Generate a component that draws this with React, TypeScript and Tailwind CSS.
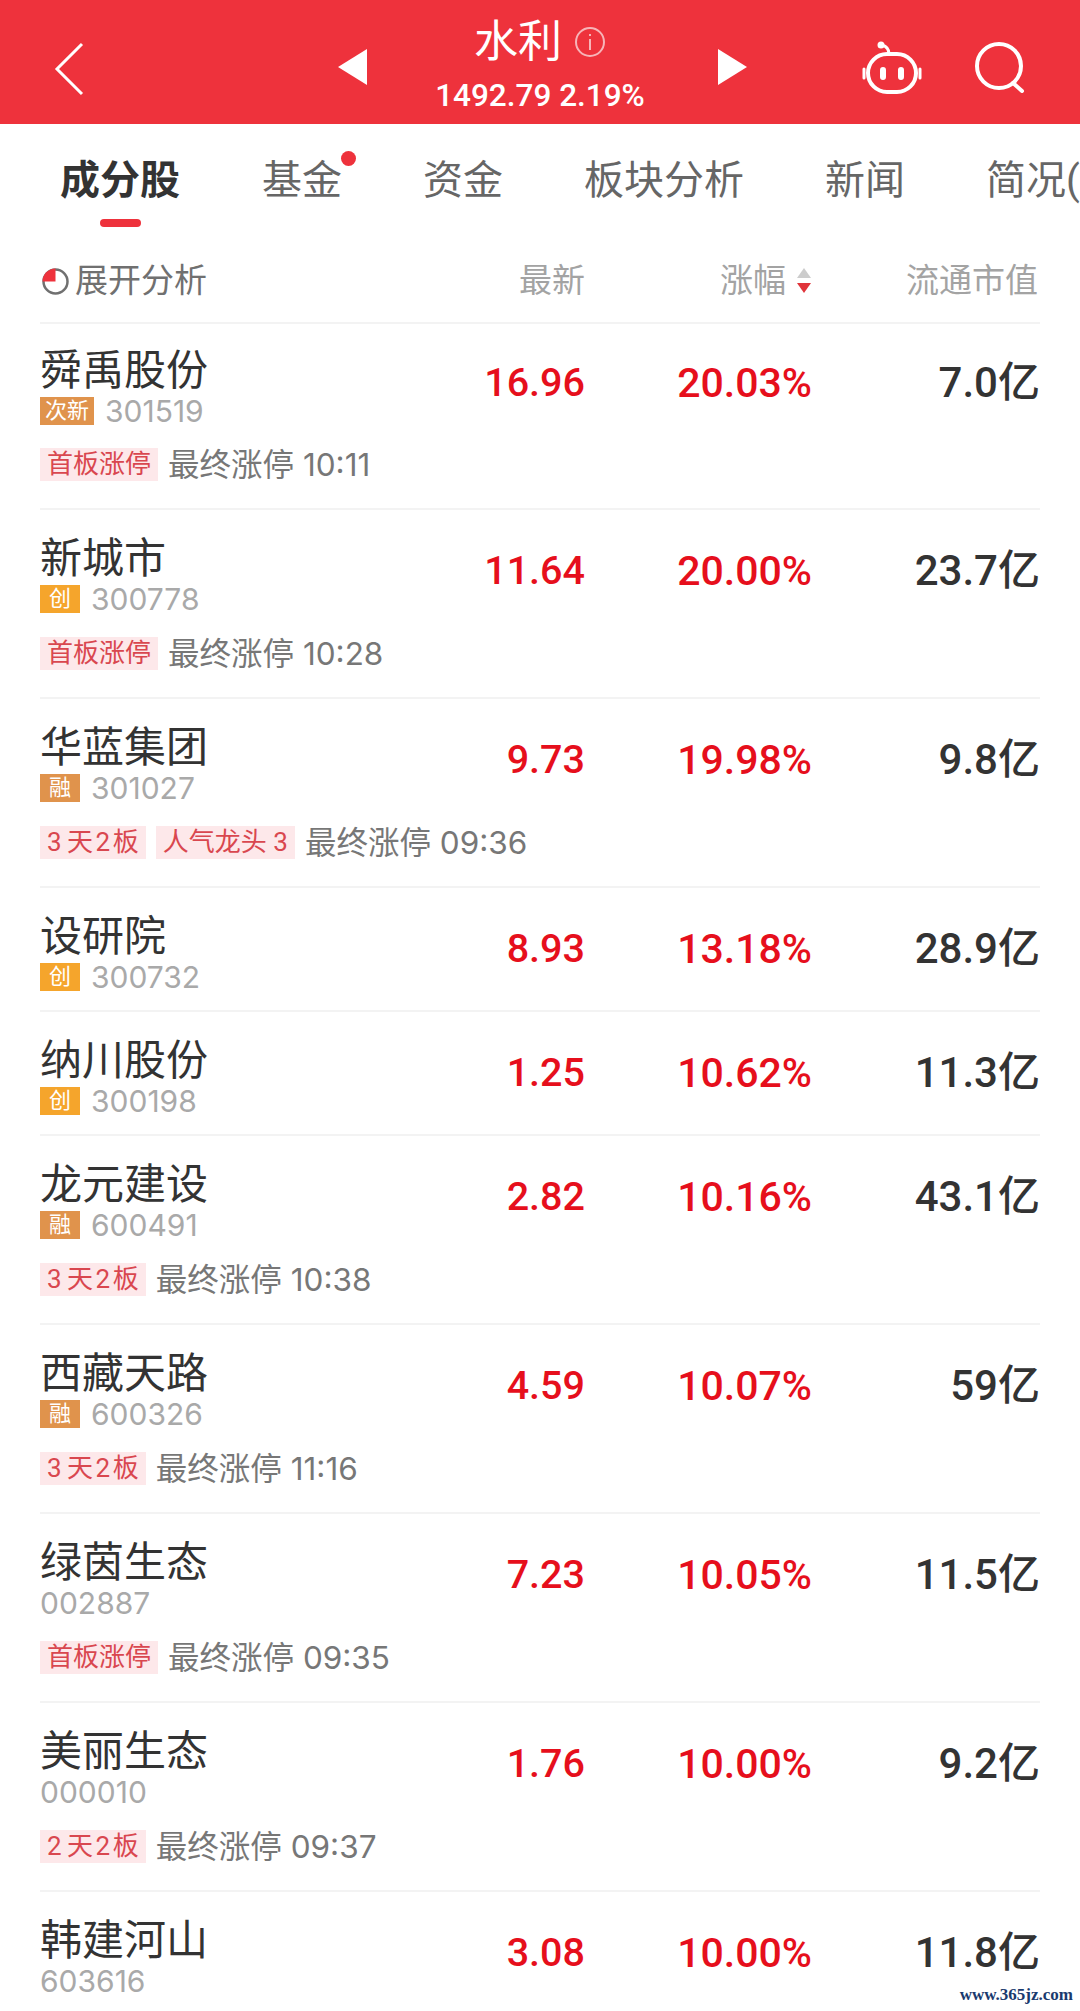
import React from 'react';

type Stock = {
  name: string;
  code: string;
  badge?: string;
  badgeColor?: string;
  price: string;
  pct: string;
  cap: string;
  tags?: string[];
  note?: string;
};

const RONG = 'bg-[#e0934c]';
const CHUANG = 'bg-[#f5a52c]';

// the app sets digits in tags a bit apart, thin spaces get close to that
const T32 = '3\u2009天\u200a2\u200a板';
const T22 = '2\u2009天\u200a2\u200a板';

const stocks: Stock[] = [
  { name: '舜禹股份', code: '301519', badge: '次新', badgeColor: RONG, price: '16.96', pct: '20.03%', cap: '7.0亿', tags: ['首板涨停'], note: '最终涨停 10:11' },
  { name: '新城市', code: '300778', badge: '创', badgeColor: CHUANG, price: '11.64', pct: '20.00%', cap: '23.7亿', tags: ['首板涨停'], note: '最终涨停 10:28' },
  { name: '华蓝集团', code: '301027', badge: '融', badgeColor: RONG, price: '9.73', pct: '19.98%', cap: '9.8亿', tags: [T32, '人气龙头 3'], note: '最终涨停 09:36' },
  { name: '设研院', code: '300732', badge: '创', badgeColor: CHUANG, price: '8.93', pct: '13.18%', cap: '28.9亿' },
  { name: '纳川股份', code: '300198', badge: '创', badgeColor: CHUANG, price: '1.25', pct: '10.62%', cap: '11.3亿' },
  { name: '龙元建设', code: '600491', badge: '融', badgeColor: RONG, price: '2.82', pct: '10.16%', cap: '43.1亿', tags: [T32], note: '最终涨停 10:38' },
  { name: '西藏天路', code: '600326', badge: '融', badgeColor: RONG, price: '4.59', pct: '10.07%', cap: '59亿', tags: [T32], note: '最终涨停 11:16' },
  { name: '绿茵生态', code: '002887', price: '7.23', pct: '10.05%', cap: '11.5亿', tags: ['首板涨停'], note: '最终涨停 09:35' },
  { name: '美丽生态', code: '000010', price: '1.76', pct: '10.00%', cap: '9.2亿', tags: [T22], note: '最终涨停 09:37' },
  { name: '韩建河山', code: '603616', price: '3.08', pct: '10.00%', cap: '11.8亿' },
];

const tabs = ['基金', '资金', '板块分析', '新闻', '简况('];

const StockRow: React.FC<{ stock: Stock }> = ({ stock }) => (
  <div className="group border-b-2 border-[#f3f3f3] pt-[24px] pb-[18px] first:pt-[22px]">
    <div className="flex items-start">
      <div className="w-[345px]">
        <div className="h-[50px] text-[42px] leading-[50px] text-[#333333]">{stock.name}</div>
        <div className="flex items-center h-[30px]">
          {stock.badge && (
            <span className={`${stock.badgeColor} text-white text-[22px] leading-[28px] h-[28px] min-w-[40px] text-center px-[5px] mr-[11px]`}>
              {stock.badge}
            </span>
          )}
          <span className="font-['Inter',sans-serif] text-[30px] text-[#a9a9a9]">{stock.code}</span>
        </div>
      </div>
      <div className="w-[200px] h-[48px] mt-[13px] text-right text-[39.5px] leading-[48px] font-medium text-[#e60f1c]">{stock.price}</div>
      <div className="w-[227px] h-[48px] mt-[13px] text-right text-[41px] leading-[48px] font-medium text-[#e60f1c]">{stock.pct}</div>
      <div className="w-[228px] h-[48px] mt-[13px] text-right text-[42px] leading-[48px] font-medium text-[#333333]">{stock.cap}</div>
    </div>
    {stock.tags && (
      <div className="flex items-center h-[33px] mt-[23px] group-first:mt-[22px] mb-[9px]">
        {stock.tags.map(tag => (
          <span key={tag} className="bg-[#fde8ea] text-[#d9474f] text-[26px] leading-[33px] h-[33px] px-[7px] mr-[10px]">
            {tag}
          </span>
        ))}
        <span className="h-[33px] font-['Inter','Noto_Sans_CJK_SC',sans-serif] text-[31.5px] leading-[33px] text-[#777777]">{stock.note}</span>
      </div>
    )}
  </div>
);

export default function App() {
  return (
    <div className="relative w-[1080px] h-[2011px] overflow-hidden bg-white font-['Roboto','Noto_Sans_CJK_SC',sans-serif]">
      {/* top bar */}
      <div className="h-[124px] bg-[#ee323c] text-white grid grid-cols-[1fr_auto_1fr] items-start">
        <div className="pl-[53px] pt-[42px]">
          <svg width="32" height="54" viewBox="0 0 32 54" fill="none" stroke="#fff" strokeWidth="3">
            <path d="M29 2 L4 27 L29 52" />
          </svg>
        </div>
        <div className="flex items-start ml-[5px]">
          <svg className="mt-[49px]" width="29" height="36" viewBox="0 0 29 36" fill="#fff"><path d="M29 0 V36 L0 18 Z" /></svg>
          <div className="w-[351px] pr-[5px] pt-[14px] flex flex-col items-center">
            <div className="flex items-center h-[56px]">
              <span className="text-[44px] leading-[56px]">水利</span>
              <svg className="ml-[12px]" width="32" height="32" viewBox="0 0 32 32" fill="none" stroke="#f7b4b8" strokeWidth="2">
                <circle cx="16" cy="16" r="14" />
                <path d="M16 13 V24" />
                <path d="M16 8 V10" />
              </svg>
            </div>
            <div className="mt-[6px] text-[31.5px] leading-[40px] font-medium">1492.79 2.19%</div>
          </div>
          <svg className="mt-[49px]" width="29" height="36" viewBox="0 0 29 36" fill="#fff"><path d="M0 0 V36 L29 18 Z" /></svg>
        </div>
        <div className="flex items-start justify-end gap-[53px] pt-[41px] pr-[55px]">
          <svg width="60" height="54" viewBox="0 0 60 54" fill="none" stroke="#fff" strokeWidth="4">
            <circle cx="19" cy="4" r="3.5" fill="#fff" stroke="none" />
            <path d="M20 4 Q27 6 27 13" strokeWidth="3" />
            <rect x="6" y="13" width="48" height="38" rx="19" />
            <path d="M2 28 V37 M58 28 V37" strokeLinecap="round" strokeWidth="3" />
            <path d="M21 29 V36 M39 29 V36" strokeLinecap="round" strokeWidth="6" />
          </svg>
          <svg width="50" height="52" viewBox="0 0 50 52" fill="none" stroke="#fff" strokeWidth="4">
            <circle cx="24" cy="25" r="22" />
            <path d="M38 42 L47 50" strokeLinecap="round" />
          </svg>
        </div>
      </div>

      {/* tabs */}
      <div className="h-[110px] pl-[60px] flex items-start pt-[33px] overflow-hidden whitespace-nowrap text-[40px] leading-[48px] text-[#666666]">
        <div className="relative mr-[82px]">
          <span className="font-bold text-[#333333]">成分股</span>
          <div className="absolute left-[40px] top-[62px] w-[41px] h-[8px] rounded-full bg-[#ee323c]" />
        </div>
        {tabs.map(tab => (
          <div key={tab} className="relative mr-[81px]">
            {tab}
            {tab === '基金' && <div className="absolute right-[-14px] top-[-6px] w-[15px] h-[15px] rounded-full bg-[#ee323c]" />}
          </div>
        ))}
      </div>

      {/* list */}
      <div className="pl-[40px] pr-[40px]">
        <div className="flex items-center h-[90px] pt-[6px] border-b-2 border-[#f3f3f3] text-[33px] text-[#a3a3a3]">
          <div className="w-[345px] flex items-center text-[#707070]">
            <svg className="ml-[2px] mr-[6px]" width="27" height="27" viewBox="0 0 27 27" fill="none">
              <circle cx="13.5" cy="13.5" r="12" stroke="#707070" strokeWidth="2.5" />
              <path d="M13.5 0.5 V13.5 H0.5 A13 13 0 0 1 13.5 0.5 Z" fill="#ee323c" />
            </svg>
            展开分析
          </div>
          <div className="w-[200px] text-right">最新</div>
          <div className="w-[227px] flex items-center justify-end">
            涨幅
            <svg className="ml-[10px]" width="16" height="26" viewBox="0 0 16 26">
              <path d="M8 0 L15 10 H1 Z" fill="#cccccc" />
              <path d="M1 15 H15 L8 25 Z" fill="#e0343a" />
            </svg>
          </div>
          <div className="w-[226px] text-right">流通市值</div>
        </div>
        <div>
          {stocks.map(s => (
            <StockRow key={s.code} stock={s} />
          ))}
        </div>
      </div>

      {/* watermark sits over the page */}
      <div className="absolute right-[7px] bottom-[5px] font-['Liberation_Serif',serif] font-bold text-[17px] leading-[22px] text-[#1a3a6e]">
        www.365jz.com
      </div>
    </div>
  );
}
